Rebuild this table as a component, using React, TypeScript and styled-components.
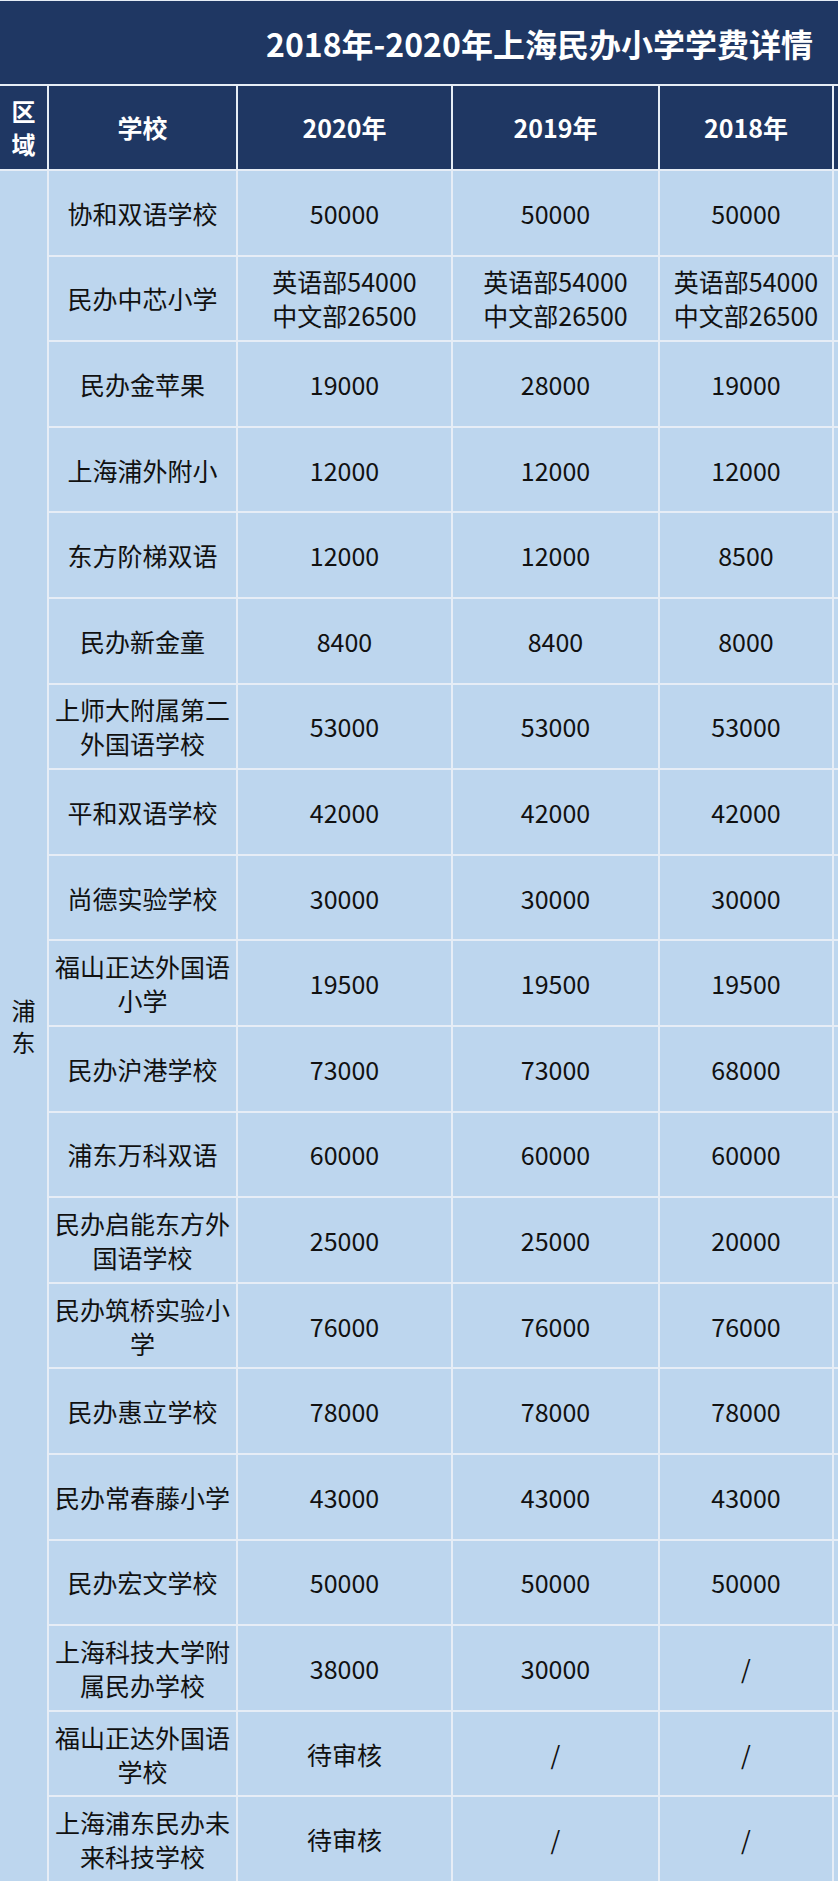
import React from 'react';
import styled, { createGlobalStyle } from 'styled-components';

type Fee = string;

interface SchoolRow {
	name: string;
	fees: [Fee, Fee, Fee];
}

const ZHONGXIN = '英语部54000\n中文部26500';

const rows: SchoolRow[] = [
	{ name: '协和双语学校', fees: ['50000', '50000', '50000'] },
	{ name: '民办中芯小学', fees: [ZHONGXIN, ZHONGXIN, ZHONGXIN] },
	{ name: '民办金苹果', fees: ['19000', '28000', '19000'] },
	{ name: '上海浦外附小', fees: ['12000', '12000', '12000'] },
	{ name: '东方阶梯双语', fees: ['12000', '12000', '8500'] },
	{ name: '民办新金童', fees: ['8400', '8400', '8000'] },
	{ name: '上师大附属第二\n外国语学校', fees: ['53000', '53000', '53000'] },
	{ name: '平和双语学校', fees: ['42000', '42000', '42000'] },
	{ name: '尚德实验学校', fees: ['30000', '30000', '30000'] },
	{ name: '福山正达外国语\n小学', fees: ['19500', '19500', '19500'] },
	{ name: '民办沪港学校', fees: ['73000', '73000', '68000'] },
	{ name: '浦东万科双语', fees: ['60000', '60000', '60000'] },
	{ name: '民办启能东方外\n国语学校', fees: ['25000', '25000', '20000'] },
	{ name: '民办筑桥实验小\n学', fees: ['76000', '76000', '76000'] },
	{ name: '民办惠立学校', fees: ['78000', '78000', '78000'] },
	{ name: '民办常春藤小学', fees: ['43000', '43000', '43000'] },
	{ name: '民办宏文学校', fees: ['50000', '50000', '50000'] },
	{ name: '上海科技大学附\n属民办学校', fees: ['38000', '30000', '/'] },
	{ name: '福山正达外国语\n学校', fees: ['待审核', '/', '/'] },
	{ name: '上海浦东民办未\n来科技学校', fees: ['待审核', '/', '/'] },
];

const years = ['2020年', '2019年', '2018年'];

const App = () => {
	return (
		<>
			<GlobalStyle />
			<Sheet>
				<TitleBar>
					<Title>2018年-2020年上海民办小学学费详情</Title>
				</TitleBar>
				<FeeGrid>
					<HeadCell $size={24}>
						<Stacked>区{'\n'}域</Stacked>
					</HeadCell>
					<HeadCell>学校</HeadCell>
					{years.map((year) => (
						<HeadCell key={year}>{year}</HeadCell>
					))}
					<HeadCell />

					<AreaCell>
						<Stacked>浦{'\n'}东</Stacked>
					</AreaCell>
					{rows.map((row) => (
						<React.Fragment key={row.name}>
							<BodyCell>{row.name}</BodyCell>
							{row.fees.map((fee, i) => (
								<BodyCell key={i}>{fee}</BodyCell>
							))}
							<BodyCell />
						</React.Fragment>
					))}
				</FeeGrid>
			</Sheet>
		</>
	);
};
export default App;

const GlobalStyle = createGlobalStyle`
	html, body {
		margin: 0;
		padding: 0;
		background: #e6edf6;
	}
	body {
		font-family: "Noto Sans CJK SC", "Noto Sans", sans-serif;
	}
`;

const Sheet = styled.div`
	width: 838px;
	height: 1881px;
	display: flex;
	flex-direction: column;
	background: #e6edf6;
	padding-top: 1px;
	box-sizing: border-box;
	overflow: hidden;
`;

const TitleBar = styled.div`
	height: 83px;
	flex: none;
	display: flex;
	align-items: center;
	padding-left: 266px;
	background: #1f3763;
`;

const Title = styled.h1`
	margin: 0;
	font-size: 32px;
	font-weight: 700;
	color: #ffffff;
	white-space: nowrap;
`;

const FeeGrid = styled.div`
	flex: 1;
	display: grid;
	grid-template-columns: 47px 187px 213px 205px 172px 4px;
	grid-template-rows: 83px repeat(20, 1fr);
	column-gap: 2px;
	row-gap: 2px;
	padding-top: 2px;
`;

const Cell = styled.div`
	display: flex;
	align-items: center;
	justify-content: center;
	text-align: center;
	white-space: pre-line;
	overflow: hidden;
`;

const HeadCell = styled(Cell)<{ $size?: number }>`
	background: #1f3763;
	color: #ffffff;
	font-size: ${({ $size }) => $size ?? 25}px;
	font-weight: 700;
	line-height: 1.3;
`;

const BodyCell = styled(Cell)`
	background: #bdd6ee;
	color: #111111;
	font-size: 25px;
	line-height: 34px;
`;

const AreaCell = styled(BodyCell)`
	grid-row: 2 / span 20;
	grid-column: 1;
	font-size: 24px;
`;

const Stacked = styled.span`
	display: block;
	white-space: pre-line;
	line-height: 1.35;
`;
